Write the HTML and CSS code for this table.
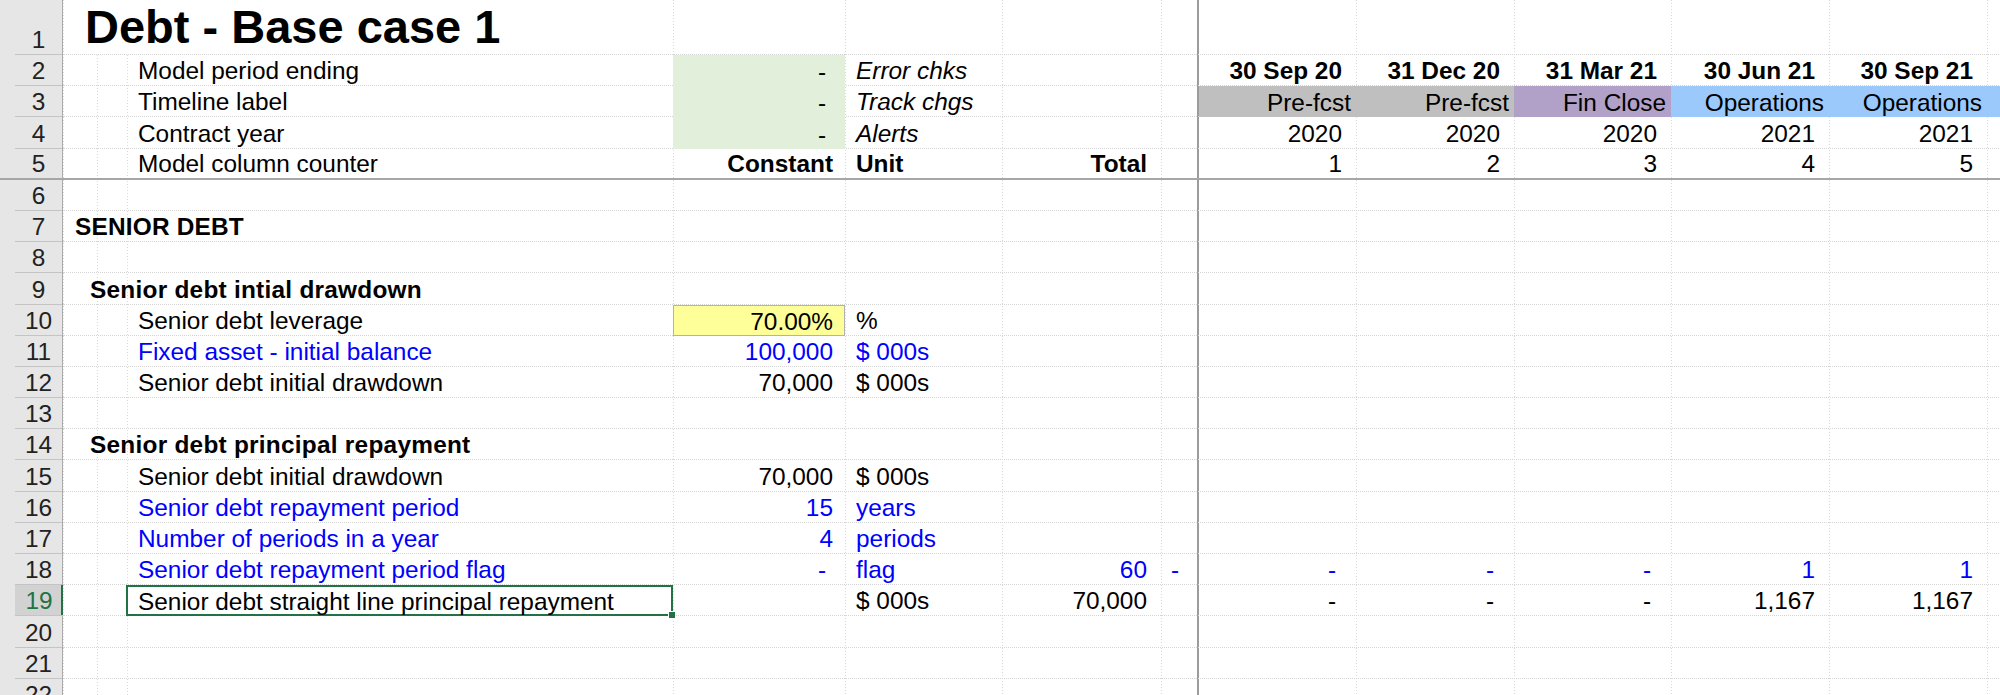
FILE: index.html
```html
<!DOCTYPE html>
<html>
<head>
<meta charset="utf-8">
<title>Debt - Base case 1</title>
<link rel="stylesheet" href="styles.css">
</head>
<body>
<div class="window">
  <div class="rowheads">
    <div class="rh r1">1</div>
    <div class="rh">2</div>
    <div class="rh">3</div>
    <div class="rh">4</div>
    <div class="rh freeze-row">5</div>
    <div class="rh">6</div>
    <div class="rh">7</div>
    <div class="rh">8</div>
    <div class="rh">9</div>
    <div class="rh">10</div>
    <div class="rh">11</div>
    <div class="rh">12</div>
    <div class="rh">13</div>
    <div class="rh">14</div>
    <div class="rh">15</div>
    <div class="rh">16</div>
    <div class="rh">17</div>
    <div class="rh">18</div>
    <div class="rh rh-sel">19</div>
    <div class="rh">20</div>
    <div class="rh">21</div>
    <div class="rh">22</div>
  </div>

  <div class="sheet">
    <!-- row 1 -->
    <div class="row r1">
      <div class="cell title">Debt - Base case 1</div>
    </div>
    <!-- row 2 -->
    <div class="row">
      <div class="cell label">Model period ending</div>
      <div class="cell const green dash">-</div>
      <div class="cell unit italic">Error chks</div>
      <div class="cell h bold">30 Sep 20</div>
      <div class="cell i bold">31 Dec 20</div>
      <div class="cell j bold">31 Mar 21</div>
      <div class="cell k bold">30 Jun 21</div>
      <div class="cell l bold">30 Sep 21</div>
    </div>
    <!-- row 3 -->
    <div class="row">
      <div class="cell label">Timeline label</div>
      <div class="cell const green dash">-</div>
      <div class="cell unit italic">Track chgs</div>
      <div class="cell h tag grey">Pre-fcst</div>
      <div class="cell i tag grey">Pre-fcst</div>
      <div class="cell j tag purple">Fin Close</div>
      <div class="cell k tag sky">Operations</div>
      <div class="cell l tag sky">Operations</div>
      <div class="cell m sky"></div>
    </div>
    <!-- row 4 -->
    <div class="row">
      <div class="cell label">Contract year</div>
      <div class="cell const green dash">-</div>
      <div class="cell unit italic">Alerts</div>
      <div class="cell h">2020</div>
      <div class="cell i">2020</div>
      <div class="cell j">2020</div>
      <div class="cell k">2021</div>
      <div class="cell l">2021</div>
    </div>
    <!-- row 5 -->
    <div class="row freeze-row">
      <div class="cell label">Model column counter</div>
      <div class="cell const bold">Constant</div>
      <div class="cell unit bold">Unit</div>
      <div class="cell total bold">Total</div>
      <div class="cell h">1</div>
      <div class="cell i">2</div>
      <div class="cell j">3</div>
      <div class="cell k">4</div>
      <div class="cell l">5</div>
    </div>
    <!-- row 6 -->
    <div class="row"></div>
    <!-- row 7 -->
    <div class="row">
      <div class="cell section bold">SENIOR DEBT</div>
    </div>
    <!-- row 8 -->
    <div class="row"></div>
    <!-- row 9 -->
    <div class="row">
      <div class="cell heading bold">Senior debt intial drawdown</div>
    </div>
    <!-- row 10 -->
    <div class="row">
      <div class="cell label">Senior debt leverage</div>
      <div class="cell const yellow">70.00%</div>
      <div class="cell unit">%</div>
    </div>
    <!-- row 11 -->
    <div class="row input">
      <div class="cell label">Fixed asset - initial balance</div>
      <div class="cell const">100,000</div>
      <div class="cell unit">$ 000s</div>
    </div>
    <!-- row 12 -->
    <div class="row">
      <div class="cell label">Senior debt initial drawdown</div>
      <div class="cell const">70,000</div>
      <div class="cell unit">$ 000s</div>
    </div>
    <!-- row 13 -->
    <div class="row"></div>
    <!-- row 14 -->
    <div class="row">
      <div class="cell heading bold">Senior debt principal repayment</div>
    </div>
    <!-- row 15 -->
    <div class="row">
      <div class="cell label">Senior debt initial drawdown</div>
      <div class="cell const">70,000</div>
      <div class="cell unit">$ 000s</div>
    </div>
    <!-- row 16 -->
    <div class="row input">
      <div class="cell label">Senior debt repayment period</div>
      <div class="cell const">15</div>
      <div class="cell unit">years</div>
    </div>
    <!-- row 17 -->
    <div class="row input">
      <div class="cell label">Number of periods in a year</div>
      <div class="cell const">4</div>
      <div class="cell unit">periods</div>
    </div>
    <!-- row 18 -->
    <div class="row input">
      <div class="cell label">Senior debt repayment period flag</div>
      <div class="cell const dash">-</div>
      <div class="cell unit">flag</div>
      <div class="cell total">60</div>
      <div class="cell g dash">-</div>
      <div class="cell h dash">-</div>
      <div class="cell i dash">-</div>
      <div class="cell j dash">-</div>
      <div class="cell k">1</div>
      <div class="cell l">1</div>
    </div>
    <!-- row 19 -->
    <div class="row">
      <div class="cell label selected">Senior debt straight line principal repayment</div>
      <div class="cell unit">$ 000s</div>
      <div class="cell total">70,000</div>
      <div class="cell h dash">-</div>
      <div class="cell i dash">-</div>
      <div class="cell j dash">-</div>
      <div class="cell k">1,167</div>
      <div class="cell l">1,167</div>
    </div>
    <!-- row 20 -->
    <div class="row"></div>
    <!-- row 21 -->
    <div class="row"></div>
    <!-- row 22 -->
    <div class="row"></div>
  </div>
</div>
</body>
</html>
```

FILE: styles.css
```css
html, body {
  margin: 0;
  padding: 0;
  background: #ffffff;
  overflow: hidden;
}

.window {
  display: flex;
  width: 2000px;
  height: 695px;
  overflow: hidden;
  font-family: "Liberation Sans", Arial, sans-serif;
  font-size: 24.4px;
  color: #000000;
}

/* ---------- row headers ---------- */
.rowheads {
  width: 62px;
  flex: 0 0 62px;
  background: #e6e6e6;
  border-right: 1px solid #ababab;
  display: flex;
  flex-direction: column;
}

.rh {
  height: 31.2px;
  flex: 0 0 31.2px;
  box-sizing: border-box;
  margin-left: 15px;
  border-bottom: 1px solid #c4c4c4;
  display: flex;
  align-items: flex-end;
  justify-content: center;
  line-height: 27px;
  padding-bottom: 1px;
  color: #222222;
}

.rh.r1 {
  height: 55px;
  flex-basis: 55px;
}

.rh.freeze-row {
  margin-left: 0;
  padding-left: 15px;
  border-bottom: 2px solid #a6a6a6;
}

.rh-sel {
  background: #d2d2d2;
  color: #217346;
  box-shadow: inset -2px 0 0 #217346;
  margin-right: -1px;
}

/* ---------- sheet ---------- */
.sheet {
  flex: 1 1 auto;
  display: flex;
  flex-direction: column;
  background-image:
    repeating-linear-gradient(to bottom, #d9d9d9 0 1px, transparent 1px 3px),
    repeating-linear-gradient(to bottom, #d9d9d9 0 1px, transparent 1px 3px),
    repeating-linear-gradient(to bottom, #d9d9d9 0 1px, transparent 1px 3px),
    repeating-linear-gradient(to bottom, #d9d9d9 0 1px, transparent 1px 3px),
    repeating-linear-gradient(to bottom, #d9d9d9 0 1px, transparent 1px 3px),
    repeating-linear-gradient(to bottom, #d9d9d9 0 1px, transparent 1px 3px),
    repeating-linear-gradient(to bottom, #d9d9d9 0 1px, transparent 1px 3px),
    linear-gradient(#9c9c9c, #9c9c9c),
    repeating-linear-gradient(to bottom, #d9d9d9 0 1px, transparent 1px 3px),
    repeating-linear-gradient(to bottom, #d9d9d9 0 1px, transparent 1px 3px),
    repeating-linear-gradient(to bottom, #d9d9d9 0 1px, transparent 1px 3px),
    repeating-linear-gradient(to bottom, #d9d9d9 0 1px, transparent 1px 3px),
    repeating-linear-gradient(to bottom, #d9d9d9 0 1px, transparent 1px 3px);
  background-size:
    1px 100%, 1px 100%, 1px 100%, 1px 100%, 1px 100%, 1px 100%, 1px 100%,
    2px 100%,
    1px 100%, 1px 100%, 1px 100%, 1px 100%, 1px 100%;
  background-repeat: no-repeat;
  background-position:
    34px 55px, 64px 55px, 610px 0, 782px 0, 939px 0, 1098px 0, 0 0,
    1134px 0,
    1293px 0, 1451px 0, 1608px 0, 1766px 0, 1924px 0;
}

.row {
  display: grid;
  grid-template-columns: 12px 52px 546px 172px 157px 159px 36px 2px 157px 158px 157px 158px 158px 1fr;
  height: 31.2px;
  flex: 0 0 31.2px;
  box-sizing: border-box;
  border-bottom: 1px dotted #d4d4d4;
}

.row.r1 {
  height: 55px;
  flex-basis: 55px;
}

.row.freeze-row {
  border-bottom: 2px solid #a6a6a6;
}

.cell {
  display: flex;
  align-items: flex-end;
  line-height: 27px;
  padding-bottom: 1px;
  white-space: nowrap;
  min-width: 0;
  justify-content: flex-end;
  padding-right: 14px;
}

.bold { font-weight: bold; }
.italic { font-style: italic; }

.input .cell { color: #0000ff; }

/* column placement */
.title {
  grid-column: 1 / 6;
  justify-content: flex-start;
  padding: 0 0 1px 22px;
  font-size: 47px;
  font-weight: bold;
  line-height: 52px;
}
.section {
  grid-column: 1 / 4;
  justify-content: flex-start;
  padding-left: 12px;
  letter-spacing: 0.2px;
}
.heading {
  grid-column: 1 / 4;
  justify-content: flex-start;
  padding-left: 27px;
  letter-spacing: 0.25px;
}
.label {
  grid-column: 3;
  justify-content: flex-start;
  padding-left: 11px;
  padding-right: 0;
}
.const { grid-column: 4; padding-right: 12px; }
.unit {
  grid-column: 5;
  justify-content: flex-start;
  padding-left: 11px;
  padding-right: 0;
}
.total { grid-column: 6; }
.g { grid-column: 7; }
.h { grid-column: 9; }
.i { grid-column: 10; }
.j { grid-column: 11; }
.k { grid-column: 12; }
.l { grid-column: 13; }
.m { grid-column: 14; }

.cell.dash { padding-right: 19px; }
.h.dash, .i.dash, .j.dash { padding-right: 20px; }
.g.dash { padding-right: 18px; }
.const.dash { padding-right: 19px; }

.tag { padding-right: 5px; }

/* fills */
.green, .grey, .purple, .sky, .yellow {
  margin-bottom: -1px;
}
.green { background: #e2efda; }
.grey { background: #bfbfbf; }
.purple { background: #b1a0c7; }
.sky { background: #9bc9fb; }
.yellow {
  background: #ffff99;
  box-shadow: inset 0 0 0 1px #b2b2b2;
}

/* active cell */
.selected {
  position: relative;
  margin-left: -1px;
  margin-bottom: -1px;
  padding-left: 12px;
  box-shadow: inset 0 0 0 2px #217346;
}
.selected::after {
  content: "";
  position: absolute;
  right: -3px;
  bottom: -3px;
  width: 6px;
  height: 6px;
  background: #217346;
  border: 1px solid #ffffff;
}
```
